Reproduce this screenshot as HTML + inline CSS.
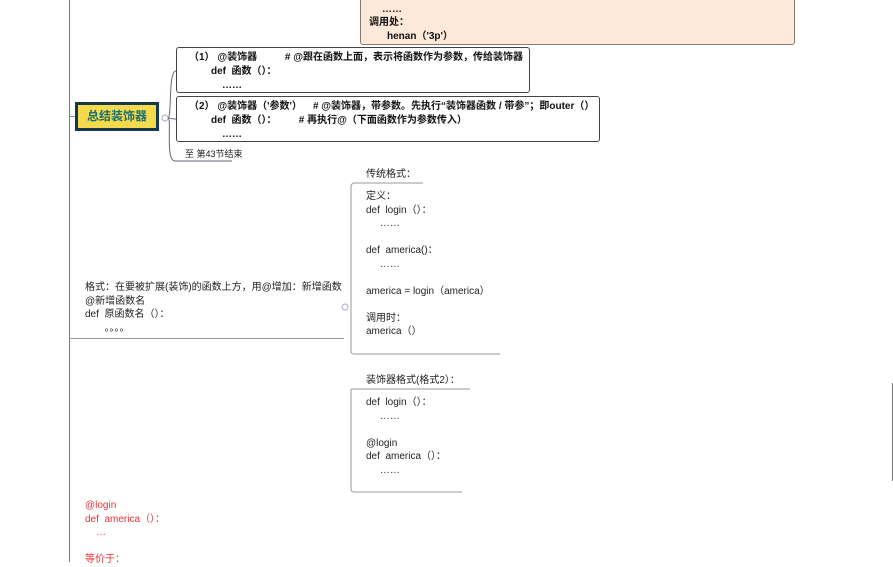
<!DOCTYPE html>
<html><head><meta charset="utf-8"><style>
body{margin:0;width:893px;height:562px;overflow:hidden;background:#fff;position:relative;font-family:"Liberation Sans","Noto Sans CJK SC",sans-serif;font-size:10px;color:#222}
.a{position:absolute;white-space:pre;line-height:13.5px}
.l{position:absolute;background:#8a8a8a}
.b{font-weight:bold;color:#111}
.r{color:#e8323a}
</style></head><body>
<div class="l" style="left:69px;top:0;width:1px;height:562px;background:#777"></div>
<div class="l" style="left:69px;top:338px;width:275px;height:1px;background:#999"></div>
<div class="l" style="left:69px;top:116px;width:6px;height:1px"></div>
<div class="l" style="left:892px;top:383px;width:1px;height:98px;background:#777"></div>

<div style="position:absolute;left:360px;top:-6px;width:433px;height:49px;background:#fde8da;border:1px solid #8a7a70;border-radius:3px"></div>
<div class="a b" style="left:382px;top:3px">……</div>
<div class="a b" style="left:369px;top:16px">调用处：</div>
<div class="a b" style="left:387px;top:30px">henan（'3p'）</div>

<div style="position:absolute;left:75px;top:102px;width:78px;height:23px;background:#f5da4d;border:3px solid #15384a;color:#177070;font-size:12px;font-weight:bold;text-align:center;line-height:23px">总结装饰器</div>

<svg style="position:absolute;left:0;top:0" width="893" height="562">
<circle cx="165" cy="118" r="3" fill="none" stroke="#aac" stroke-width="1"/>
<path d="M168 118 C172 118 168 71 176 71 M168 118 C172 118 170 119 176 119 M168 118 C172 118 165 161 175 161 L232 161" fill="none" stroke="#667" stroke-width="1"/>
<circle cx="345" cy="307" r="3" fill="none" stroke="#aac" stroke-width="1"/>
<path d="M351 187 Q351 183 355 183 L423 183 M351 187 L351 351 Q351 354 354 354 L500 354 M351 389 L470 389 M351 389 L351 489 Q351 492 354 492 L462 492" fill="none" stroke="#999" stroke-width="1"/>
</svg>

<div style="position:absolute;left:176px;top:47px;width:352px;height:44px;border:1px solid #444;border-radius:3px"></div>
<div style="position:absolute;left:176px;top:96px;width:422px;height:44px;border:1px solid #444;border-radius:3px"></div>
<div class="a b" style="left:189px;top:51px">（1） @装饰器          # @跟在函数上面，表示将函数作为参数，传给装饰器</div>
<div class="a b" style="left:211px;top:65px">def  函数（）：</div>
<div class="a b" style="left:222px;top:79px">……</div>
<div class="a b" style="left:189px;top:100px">（2） @装饰器（'参数'）    # @装饰器，带参数。先执行“装饰器函数 / 带参”；即outer（）</div>
<div class="a b" style="left:211px;top:114px">def  函数（）：        # 再执行@（下面函数作为参数传入）</div>
<div class="a b" style="left:222px;top:128px">……</div>
<div class="a" style="left:185px;top:148px;font-size:9px">至 第43节结束</div>

<div class="a" style="left:366px;top:168px">传统格式：</div>
<div class="a" style="left:366px;top:190px">定义：
def  login（）：
     ……

def  america()：
     ……

america = login（america）

调用时：
america（）</div>

<div class="a" style="left:85px;top:281px">格式：在要被扩展(装饰)的函数上方，用@增加：新增函数
@新增函数名
def  原函数名（）：
       。。。。</div>

<div class="a" style="left:366px;top:374px">装饰器格式(格式2）：</div>
<div class="a" style="left:366px;top:396px">def  login（）：
     ……

@login
def  america（）：
     ……</div>

<div class="a r" style="left:85px;top:499px">@login
def  america（）：
    …

等价于：</div>
</body></html>
